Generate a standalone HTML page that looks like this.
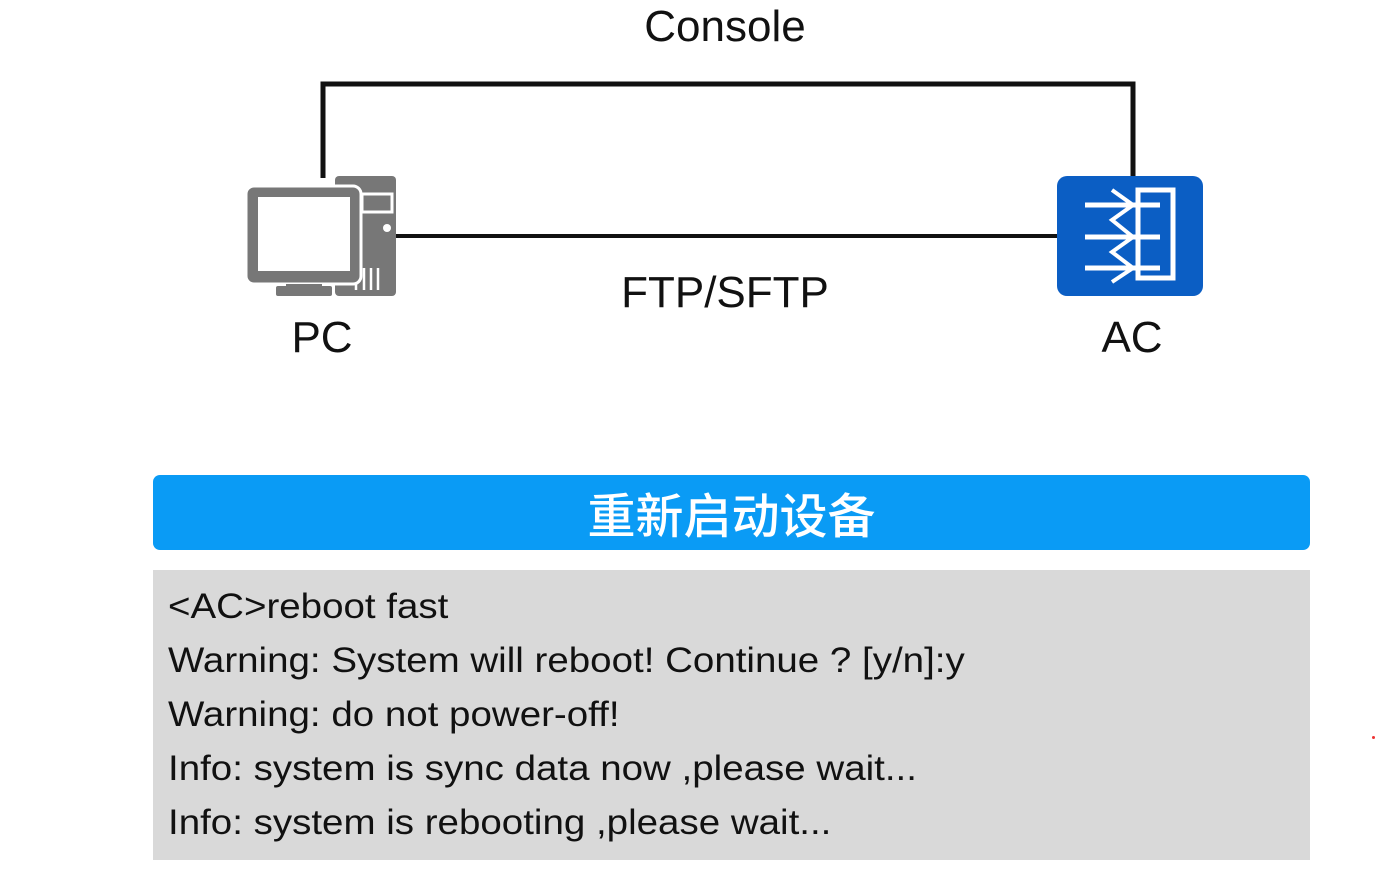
<!DOCTYPE html>
<html><head><meta charset="utf-8"><style>
body{margin:0;width:1377px;height:885px;background:#fff;position:relative;overflow:hidden;font-family:"Liberation Sans","Noto Sans CJK SC",sans-serif;color:#111}
.t{position:absolute;white-space:nowrap}
.bar{position:absolute;left:153px;top:475px;width:1157px;height:75px;background:#0a9bf5;border-radius:7px;color:#fff;font-size:48px;text-align:center;line-height:75px;font-family:"Noto Sans CJK SC",sans-serif;font-weight:500}
.box{position:absolute;left:153px;top:570px;width:1157px;height:290px;background:#d9d9d9}
.ln{position:absolute;left:168px;font-size:35px;line-height:54px;transform:scaleX(1.1);transform-origin:0 0;white-space:nowrap}
</style></head><body>
<div class="t" style="left:0;width:1450px;text-align:center;top:2px;font-size:44px">Console</div>
<svg width="1377" height="400" style="position:absolute;left:0;top:0">
<path d="M323 178V84H1133V178" fill="none" stroke="#111" stroke-width="5"/>
<path d="M396 236H1058" stroke="#111" stroke-width="4"/>
<rect x="335" y="176" width="61" height="120" rx="4" fill="#777"/>
<rect x="362" y="194" width="30" height="18" fill="none" stroke="#fff" stroke-width="3"/>
<circle cx="387" cy="228" r="4" fill="#fff"/>
<path d="M356 268V290M364 268V290M371 268V290M378 268V290" stroke="#fff" stroke-width="2.5"/>
<rect x="246" y="186" width="115" height="98" rx="8" fill="#777" stroke="#fff" stroke-width="3"/>
<rect x="258" y="197" width="92" height="74" fill="#fff"/>
<rect x="286" y="284" width="36" height="5" fill="#777"/>
<rect x="276" y="286" width="56" height="10" rx="2" fill="#777"/>
<rect x="1057" y="176" width="146" height="120" rx="10" fill="#0b5ec4"/>
<rect x="1138" y="190" width="35" height="88" fill="none" stroke="#fff" stroke-width="5"/>
<path d="M1085 205H1160M1085 237H1160M1085 268H1160" stroke="#fff" stroke-width="5"/>
<path d="M1112 190L1133 205L1112 220L1133 237L1112 252L1133 268L1112 282" fill="none" stroke="#fff" stroke-width="4"/>
</svg>
<div class="t" style="left:0;width:1450px;text-align:center;top:268px;font-size:44px">FTP/SFTP</div>
<div class="t" style="left:222px;width:200px;text-align:center;top:313px;font-size:44px">PC</div>
<div class="t" style="left:1032px;width:200px;text-align:center;top:313px;font-size:44px">AC</div>
<div class="bar">重新启动设备</div>
<div class="box"></div>
<div class="ln" style="top:580px">&lt;AC&gt;reboot fast</div>
<div class="ln" style="top:634px">Warning: System will reboot! Continue ? [y/n]:y</div>
<div class="ln" style="top:688px">Warning: do not power-off!</div>
<div class="ln" style="top:742px">Info: system is sync data now ,please wait...</div>
<div class="ln" style="top:796px">Info: system is rebooting ,please wait...</div>
<div style="position:absolute;left:1372px;top:736px;width:3px;height:3px;background:#e33;border-radius:50%"></div>
</body></html>
